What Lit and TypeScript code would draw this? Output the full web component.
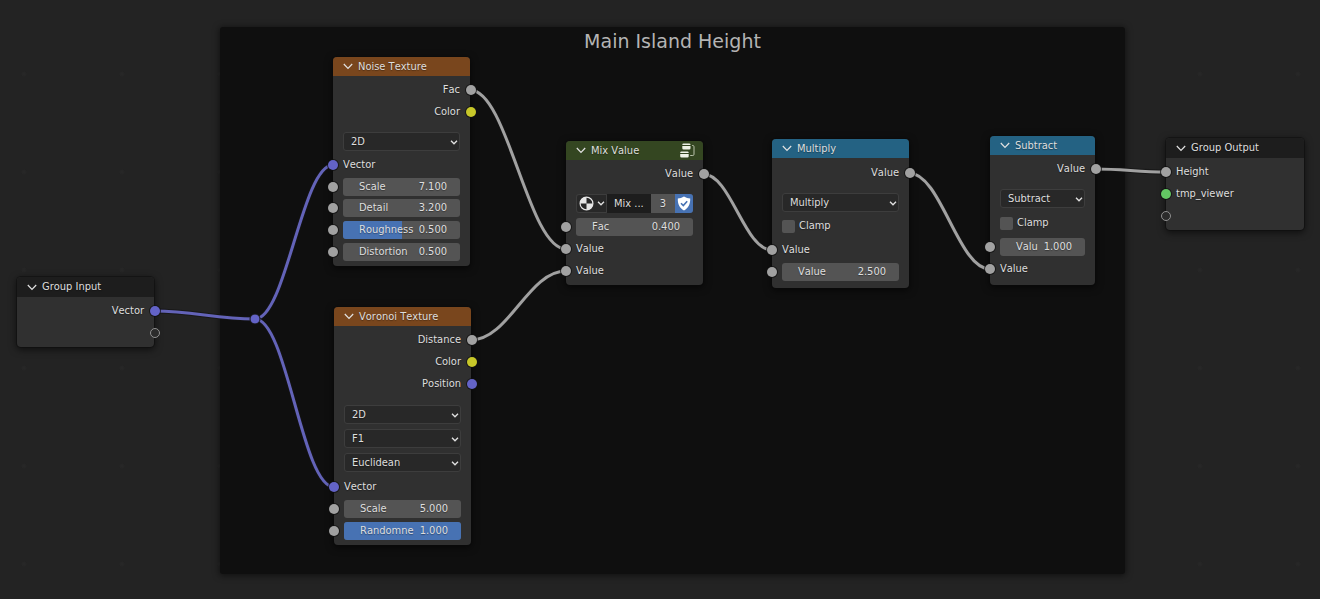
import { LitElement, html, svg, css, nothing } from "lit";
import { customElement, property } from "lit/decorators.js";
import { classMap } from "lit/directives/class-map.js";
import { styleMap } from "lit/directives/style-map.js";

type SocketKind = "value" | "color" | "vector" | "shader" | "empty";

interface Row {
  label: string;
  socket: SocketKind;
  value?: string;
  fill?: number;
}

type Section =
  | { kind: "outputs"; gap: number; rows: Row[] }
  | { kind: "inputs"; gap: number; rows: Row[] }
  | { kind: "menus"; gap: number; options: string[] }
  | { kind: "check"; gap: number; label: string }
  | { kind: "group"; gap: number; name: string; users: string };

interface NodeData {
  id: string;
  title: string;
  tone: "texture" | "group" | "math" | "io";
  x: number;
  y: number;
  width: number;
  sections: Section[];
}

const NODES: NodeData[] = [
  {
    id: "group-input", title: "Group Input", tone: "io", x: 17, y: 277, width: 137,
    sections: [
      { kind: "outputs", gap: 3, rows: [{ label: "Vector", socket: "vector" }, { label: "", socket: "empty" }] },
    ],
  },
  {
    id: "noise", title: "Noise Texture", tone: "texture", x: 333, y: 57, width: 137,
    sections: [
      { kind: "outputs", gap: 3, rows: [{ label: "Fac", socket: "value" }, { label: "Color", socket: "color" }] },
      { kind: "menus", gap: 9, options: ["2D"] },
      {
        kind: "inputs", gap: 3,
        rows: [
          { label: "Vector", socket: "vector" },
          { label: "Scale", socket: "value", value: "7.100" },
          { label: "Detail", socket: "value", value: "3.200" },
          { label: "Roughness", socket: "value", value: "0.500", fill: 50 },
          { label: "Distortion", socket: "value", value: "0.500" },
        ],
      },
    ],
  },
  {
    id: "voronoi", title: "Voronoi Texture", tone: "texture", x: 334, y: 307, width: 137,
    sections: [
      {
        kind: "outputs", gap: 3,
        rows: [
          { label: "Distance", socket: "value" },
          { label: "Color", socket: "color" },
          { label: "Position", socket: "vector" },
        ],
      },
      { kind: "menus", gap: 10, options: ["2D", "F1", "Euclidean"] },
      {
        kind: "inputs", gap: 4,
        rows: [
          { label: "Vector", socket: "vector" },
          { label: "Scale", socket: "value", value: "5.000" },
          { label: "Randomne", socket: "value", value: "1.000", fill: 100 },
        ],
      },
    ],
  },
  {
    id: "mix", title: "Mix Value", tone: "group", x: 566, y: 141, width: 137,
    sections: [
      { kind: "outputs", gap: 3, rows: [{ label: "Value", socket: "value" }] },
      { kind: "group", gap: 9, name: "Mix ...", users: "3" },
      {
        kind: "inputs", gap: 3,
        rows: [
          { label: "Fac", socket: "value", value: "0.400" },
          { label: "Value", socket: "value" },
          { label: "Value", socket: "value" },
        ],
      },
    ],
  },
  {
    id: "multiply", title: "Multiply", tone: "math", x: 772, y: 139, width: 137,
    sections: [
      { kind: "outputs", gap: 4, rows: [{ label: "Value", socket: "value" }] },
      { kind: "menus", gap: 9, options: ["Multiply"] },
      { kind: "check", gap: 3, label: "Clamp" },
      {
        kind: "inputs", gap: 2,
        rows: [
          { label: "Value", socket: "value" },
          { label: "Value", socket: "value", value: "2.500" },
        ],
      },
    ],
  },
  {
    id: "subtract", title: "Subtract", tone: "math", x: 990, y: 136, width: 105,
    sections: [
      { kind: "outputs", gap: 3, rows: [{ label: "Value", socket: "value" }] },
      { kind: "menus", gap: 9, options: ["Subtract"] },
      { kind: "check", gap: 4, label: "Clamp" },
      {
        kind: "inputs", gap: 2,
        rows: [
          { label: "Valu", socket: "value", value: "1.000" },
          { label: "Value", socket: "value" },
        ],
      },
    ],
  },
  {
    id: "group-output", title: "Group Output", tone: "io", x: 1166, y: 138, width: 138,
    sections: [
      {
        kind: "inputs", gap: 3,
        rows: [
          { label: "Height", socket: "value" },
          { label: "tmp_viewer", socket: "shader" },
          { label: "", socket: "empty" },
        ],
      },
    ],
  },
];

interface Wire {
  from: [number, number];
  to: [number, number];
  kind: "value" | "vector";
}

const WIRES: Wire[] = [
  { from: [154, 311], to: [255, 319], kind: "vector" },
  { from: [255, 319], to: [333, 165], kind: "vector" },
  { from: [255, 319], to: [334, 487], kind: "vector" },
  { from: [470, 90], to: [566, 249], kind: "value" },
  { from: [471, 340], to: [566, 271], kind: "value" },
  { from: [703, 174], to: [772, 250], kind: "value" },
  { from: [909, 173], to: [990, 269], kind: "value" },
  { from: [1095, 169], to: [1166, 172], kind: "value" },
];

const wirePath = ({ from: [x1, y1], to: [x2, y2] }: Wire) => {
  const handle = Math.round(((x2 - x1) * 2) / 5);
  return `M${x1} ${y1}C${x1 + handle} ${y1} ${x2 - handle} ${y2} ${x2} ${y2}`;
};

// Rows sit on a pitch slightly under 22px, so five of them share 109px.
const rowsHeight = (count: number) => Math.ceil((count * 109) / 5);

@customElement("shader-node")
export class ShaderNode extends LitElement {
  @property({ attribute: false }) data!: NodeData;

  static styles = css`
    :host {
      display: block;
      box-sizing: border-box;
      border-radius: 4px;
      background: #303030;
      box-shadow: 0 0 0 1px rgba(12, 12, 12, 0.45), 0 2px 7px 1px rgba(0, 0, 0, 0.55);
      color: #dedede;
      font: 11px/18px "DejaVu Sans Condensed", "DejaVu Sans", sans-serif;
      font-kerning: none;
      text-shadow: 0 1px 1px rgba(0, 0, 0, 0.35);
    }
    button, input, select {
      margin: 0;
      border: 0;
      padding: 0;
      font: inherit;
      font-kerning: none;
      color: inherit;
      text-shadow: inherit;
      background: none;
      outline: none;
      appearance: none;
      min-width: 0;
    }
    .header {
      display: flex;
      align-items: center;
      height: 19px;
      padding: 0 8px 0 10px;
      border-radius: 4px 4px 0 0;
    }
    .texture { background: #79461d; }
    .group { background: #344621; }
    .math { background: #246283; }
    .io { background: #1d1d1d; height: 20px; }
    .toggle { display: flex; margin-right: 5px; }
    .title { flex: 1; }
    .icon { display: block; fill: none; stroke: #e2e2e2; }
    .body { padding-bottom: 3px; }
    .math + .body { padding-bottom: 5px; }
    .rows { display: grid; grid-auto-rows: 1fr; }
    .row {
      position: relative;
      display: flex;
      align-items: center;
      padding: 0 10px;
    }
    .outputs .row { justify-content: flex-end; }
    .socket {
      position: absolute;
      left: -5px;
      width: 10px;
      height: 10px;
      box-sizing: border-box;
      border-radius: 50%;
      box-shadow: 0 0 0 1px rgba(16, 16, 16, 0.75);
    }
    .outputs .socket { left: auto; right: -6px; }
    .value { background: #a1a1a1; }
    .color { background: #c7c729; }
    .vector { background: #6363c7; }
    .shader { background: #63c763; }
    .empty { background: #2b2b2b; border: 1px solid #909090; box-shadow: none; }
    .field {
      position: relative;
      display: flex;
      flex: 1;
      height: 18px;
      min-width: 0;
      border-radius: 3px;
      overflow: hidden;
      background: #545454;
      padding: 0 13px 0 16px;
    }
    .fill { position: absolute; inset: 0 auto 0 0; background: #4772b3; }
    .name, .number { position: relative; }
    .name { flex: none; }
    .number { flex: 1; width: 0; text-align: right; }
    .menus { display: grid; gap: 5px; padding: 0 10px; }
    .menu { position: relative; display: flex; height: 19px; }
    .menu select {
      flex: 1;
      box-sizing: border-box;
      border: 1px solid #3d3d3d;
      border-radius: 3px;
      background: #282828;
      padding: 0 16px 0 7px;
      line-height: 17px;
    }
    .menu .icon { position: absolute; right: 2px; top: 8px; pointer-events: none; }
    .check { display: flex; align-items: center; gap: 4px; height: 22px; padding: 0 10px; }
    .box { width: 13px; height: 13px; border-radius: 2px; background: #545454; }
    .picker {
      display: grid;
      grid-template-columns: 31px 1fr 24px 18px;
      height: 19px;
      margin: 0 10px;
      border-radius: 3px;
      overflow: hidden;
      background: #3d3d3d;
    }
    .browse {
      display: flex;
      align-items: center;
      justify-content: center;
      gap: 3px;
      background: #282828;
      border: 1px solid #3d3d3d;
      border-radius: 3px 0 0 3px;
    }
    .browse svg { flex: none; }
    .group-name { background: #1d1d1d; padding-left: 7px; }
    .users { background: #545454; }
    .fake { display: flex; align-items: center; justify-content: center; background: #4772b3; }
  `;

  private arrow() {
    return html`<svg class="icon" width="8" height="5" viewBox="0 0 8 5"><path d="M1 .8 4 3.8 7 .8" stroke-width="1.3" /></svg>`;
  }

  private row(row: Row, key: string) {
    const socket = html`<span class=${classMap({ socket: true, [row.socket]: true })}></span>`;
    if (row.value === undefined) {
      return html`<div class="row">${socket}<span>${row.label}</span></div>`;
    }
    return html`
      <div class="row">
        ${socket}
        <div class="field">
          ${row.fill ? html`<span class="fill" style=${styleMap({ width: `${row.fill}%` })}></span>` : nothing}
          <label class="name" for=${key}>${row.label}</label>
          <input class="number" id=${key} type="text" .value=${row.value} />
        </div>
      </div>`;
  }

  private section(section: Section, index: number) {
    switch (section.kind) {
      case "outputs":
      case "inputs":
        return html`<div
          class=${classMap({ rows: true, [section.kind]: true })}
          style=${styleMap({ height: `${rowsHeight(section.rows.length)}px` })}
        >${section.rows.map((r, i) => this.row(r, `f${index}-${i}`))}</div>`;
      case "menus":
        return html`<div class="menus">${section.options.map(
          (o) => html`<div class="menu"><select aria-label=${o}><option>${o}</option></select>${this.arrow()}</div>`
        )}</div>`;
      case "check":
        return html`<label class="check"><input class="box" type="checkbox" />${section.label}</label>`;
      case "group":
        return html`<div class="picker">
          <button class="browse" aria-label="Browse node groups">
            <svg width="15" height="15" viewBox="0 0 15 15">
              <circle cx="7.5" cy="7.5" r="6.4" fill="#282828" stroke="#e6e6e6" stroke-width="1.2" />
              <path d="M7.5 7.5V1A6.5 6.5 0 0 0 1 7.5ZM7.5 7.5H14A6.5 6.5 0 0 1 7.5 14Z" fill="#e6e6e6" />
            </svg>
            ${this.arrow()}
          </button>
          <input class="group-name" type="text" aria-label="Group name" .value=${section.name} />
          <button class="users">${section.users}</button>
          <button class="fake" aria-label="Fake user">
            <svg width="14" height="15" viewBox="0 0 14 15">
              <path d="M7 .6C5 2 3 2.4.8 2.5.6 8 2.4 12 7 14.4 11.6 12 13.4 8 13.2 2.5 11 2.4 9 2 7 .6Z" fill="#fff" />
              <path d="M4 7.3 6.3 9.6 10.2 5.2" fill="none" stroke="#4772b3" stroke-width="1.6" />
            </svg>
          </button>
        </div>`;
    }
  }

  render() {
    const { title, tone, sections } = this.data;
    return html`
      <div class=${classMap({ header: true, [tone]: true })}>
        <button class="toggle" aria-label="Collapse ${title}">
          <svg class="icon" width="10" height="7" viewBox="0 0 10 7"><path d="M.8 1 5 5.4 9.2 1" stroke-width="1.2" /></svg>
        </button>
        <span class="title">${title}</span>
        ${tone === "group"
          ? html`<svg width="15" height="15" viewBox="0 0 15 15">
              <path d="M2.3 2V1.8A1.3 1.3 0 0 1 3.6.5h5.6a1.3 1.3 0 0 1 1.3 1.3V2ZM2.3 3h8.2v2.2a1.3 1.3 0 0 1-1.3 1.3H3.6a1.3 1.3 0 0 1-1.3-1.3Z" fill="#eef2e6" />
              <path d="M.2 10v-.2a1.3 1.3 0 0 1 1.3-1.3h5.9a1.3 1.3 0 0 1 1.3 1.3v.2ZM.2 11h8.5v2.2a1.3 1.3 0 0 1-1.3 1.3H1.5a1.3 1.3 0 0 1-1.3-1.3Z" fill="#eef2e6" />
              <path d="M12 2.5h.8a1.2 1.2 0 0 1 1.2 1.2v7.6a1.2 1.2 0 0 1-1.2 1.2h-2.6" fill="none" stroke="#b9c2ab" />
            </svg>`
          : nothing}
      </div>
      <div class="body">
        ${sections.map(
          (s, i) => html`<div style=${styleMap({ "padding-top": `${s.gap}px` })}>${this.section(s, i)}</div>`
        )}
      </div>`;
  }
}

@customElement("app-root")
export class AppRoot extends LitElement {
  static styles = css`
    :host {
      display: block;
      position: relative;
      height: 100vh;
      overflow: hidden;
      background: radial-gradient(circle, #272727 1px, transparent 3px) -25px 25px / 98px 98px #232323;
    }
    .frame {
      position: absolute;
      left: 220px;
      top: 27px;
      width: 905px;
      height: 547px;
      border-radius: 3px;
      background: #0f0f0f;
      box-shadow: 0 1px 6px 1px rgba(0, 0, 0, 0.5);
    }
    .caption {
      margin: 0;
      text-align: center;
      font: 19px/28px "DejaVu Sans", sans-serif;
      color: #b4b4b4;
    }
    .wires { position: absolute; left: 0; top: 0; width: 100%; height: 100%; fill: none; }
    .shade { stroke: rgba(20, 20, 20, 0.7); stroke-width: 5; }
    .value { stroke: #a1a1a1; stroke-width: 3; }
    .vector { stroke: #6363b8; stroke-width: 3; }
    .reroute { fill: #6363c7; stroke: #161616; stroke-width: 1; }
    shader-node { position: absolute; }
  `;

  render() {
    return html`
      <section class="frame"><h1 class="caption">Main Island Height</h1></section>
      <svg class="wires" aria-hidden="true">
        ${WIRES.map((w) => svg`<path class="shade" d=${wirePath(w)} /><path class=${w.kind} d=${wirePath(w)} />`)}
        <circle class="reroute" cx="255" cy="319" r="5" />
      </svg>
      ${NODES.map(
        (n) => html`<shader-node
          .data=${n}
          style=${styleMap({ left: `${n.x}px`, top: `${n.y}px`, width: `${n.width}px` })}
        ></shader-node>`
      )}`;
  }
}
